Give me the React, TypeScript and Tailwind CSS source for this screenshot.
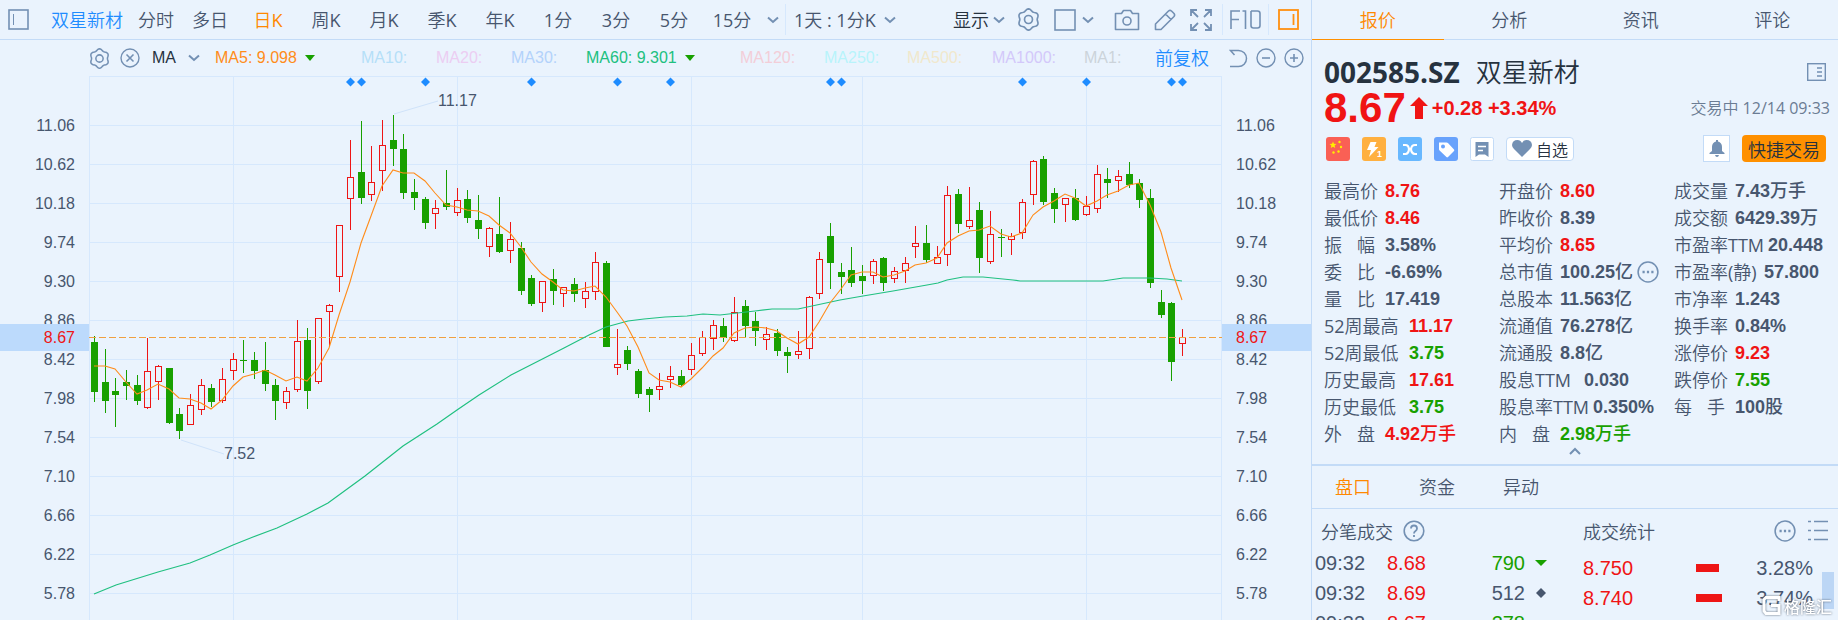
import React from "react";

type Candle = [high: number, bodyTop: number, bodyBottom: number, low: number, rising: 0 | 1];

const CANDLES: Candle[] = [
  [336, 342, 392, 402, 0], [349, 382, 401, 413, 0], [378, 391, 395, 427, 0], [370, 382, 386, 400, 0],
  [375, 385, 401, 405, 0], [338, 371, 408, 409, 1], [365, 366, 382, 400, 1], [368, 368, 423, 424, 0],
  [408, 414, 431, 439, 0], [394, 405, 425, 425, 1], [379, 385, 410, 415, 1], [384, 388, 402, 407, 0],
  [368, 379, 401, 403, 1], [353, 359, 371, 380, 1], [340, 360, 361, 373, 0], [352, 360, 371, 379, 0],
  [342, 370, 384, 391, 0], [379, 385, 401, 420, 0], [387, 391, 403, 409, 1], [320, 341, 390, 392, 1],
  [328, 340, 391, 409, 0], [318, 318, 382, 384, 1], [304, 305, 312, 347, 1], [225, 225, 277, 292, 1],
  [140, 177, 199, 230, 1], [121, 172, 198, 204, 0], [146, 182, 195, 201, 1], [120, 145, 171, 191, 1],
  [115, 140, 149, 166, 0], [134, 149, 193, 199, 0], [179, 192, 198, 210, 0], [197, 199, 223, 229, 0],
  [200, 208, 214, 229, 1], [170, 203, 207, 210, 0], [188, 200, 213, 216, 1], [190, 199, 218, 223, 0],
  [195, 220, 229, 239, 0], [227, 228, 247, 257, 1], [197, 234, 252, 253, 0], [222, 239, 251, 263, 1],
  [242, 248, 291, 295, 0], [275, 278, 304, 306, 0], [281, 281, 303, 312, 1], [269, 279, 291, 305, 0],
  [287, 287, 294, 307, 1], [278, 284, 294, 302, 0], [282, 291, 299, 308, 1], [252, 262, 292, 300, 1],
  [261, 263, 347, 347, 0], [329, 364, 368, 375, 1], [346, 350, 364, 370, 0], [369, 371, 394, 398, 0],
  [387, 389, 395, 412, 0], [373, 386, 390, 400, 1], [366, 376, 380, 388, 1], [370, 376, 385, 387, 0],
  [343, 355, 370, 375, 1], [331, 337, 354, 356, 1], [320, 325, 339, 350, 1], [318, 326, 338, 342, 0],
  [297, 312, 341, 342, 1], [300, 306, 326, 337, 0], [312, 321, 331, 346, 0], [327, 334, 340, 350, 1],
  [329, 333, 351, 356, 0], [347, 352, 356, 373, 0], [331, 351, 355, 359, 1], [296, 297, 349, 359, 1],
  [252, 259, 294, 299, 1], [223, 236, 263, 289, 0], [263, 272, 277, 294, 0], [247, 270, 283, 287, 0],
  [265, 276, 281, 294, 0], [259, 261, 276, 284, 1], [257, 258, 283, 291, 0], [267, 271, 279, 283, 1],
  [257, 263, 271, 283, 1], [226, 243, 247, 258, 1], [225, 243, 260, 263, 0], [246, 257, 264, 264, 1],
  [186, 195, 255, 266, 1], [189, 194, 224, 233, 0], [187, 220, 227, 229, 1], [202, 210, 258, 273, 0],
  [211, 234, 262, 264, 1], [229, 237, 238, 257, 0], [233, 236, 240, 255, 1], [199, 202, 233, 239, 1],
  [160, 161, 195, 205, 1], [156, 159, 202, 205, 0], [188, 193, 209, 223, 0], [198, 198, 205, 222, 1],
  [189, 198, 220, 221, 0], [196, 206, 215, 216, 1], [165, 174, 209, 213, 1], [168, 179, 183, 198, 0],
  [170, 176, 181, 192, 1], [162, 174, 185, 188, 0], [179, 183, 200, 208, 0], [189, 198, 283, 288, 0],
  [290, 302, 315, 318, 0], [302, 303, 362, 381, 0], [329, 337, 344, 356, 1],
];

const MA5 = [
  366, 366, 369, 382, 394, 390, 384, 389, 398, 399, 403, 409, 400, 386, 377, 374, 370, 375, 381, 377, 381,
  368, 348, 315, 282, 243, 216, 186, 170, 173, 173, 181, 193, 205, 207, 210, 211, 216, 225, 233, 247, 262,
  274, 282, 290, 291, 288, 286, 297, 312, 326, 347, 373, 380, 382, 387, 379, 368, 356, 348, 333, 328, 327,
  328, 331, 338, 344, 337, 322, 303, 289, 275, 272, 272, 277, 275, 271, 265, 263, 258, 243, 236, 231, 230,
  226, 234, 237, 233, 215, 207, 201, 194, 198, 206, 201, 195, 191, 185, 183, 205, 232, 268, 300,
];

const MA60 =
  "94,594 116,585 158,572 190,563 210,555 233,545 253,537 277,528 307,514 328,503 365,476 403,446 437,424 457,410 479,395 511,375 564,348 589,335 606,327 628,321 644,319 665,317 687,316 703,314 720,315 755,311 772,309 798,309 840,300 863,296 893,291 927,285 938,283 947,280 963,277 983,277 1013,280 1020,281 1103,281 1123,278 1150,278 1167,279 1182,281";

const AXIS = ["11.06", "10.62", "10.18", "9.74", "9.30", "8.86", "8.42", "7.98", "7.54", "7.10", "6.66", "6.22", "5.78"];
const EVENTS = [350, 361, 425, 531, 617, 670, 830, 841, 1022, 1086, 1171, 1182];

const candleX = (i: number) => 94 + Math.round((i * 32) / 3);

function Chart() {
  return (
    <svg
      className="block h-[544px] w-full"
      viewBox="89 76 1133 544"
      preserveAspectRatio="none"
      role="img"
      aria-label="日K"
    >
      <g shapeRendering="crispEdges">
        <g fill="#d6e8fd">
          <rect x="89" y="76" width="1133" height="1" />
          {AXIS.map((label, i) => (
            <rect key={label} x="89" y={125 + i * 39} width="1133" height="1" />
          ))}
          {[89, 233, 457, 691, 862, 1086, 1221].map((x) => (
            <rect key={x} x={x} y="76" width="1" height="544" />
          ))}
        </g>
        {CANDLES.map(([high, top, bottom, low, rising], i) => {
          const x = candleX(i);
          return rising ? (
            <g key={i} fill="#ee1515">
              {top > high && <rect x={x} y={high} width="1" height={top - high} />}
              {low > bottom && <rect x={x} y={bottom} width="1" height={low - bottom} />}
              <rect x={x - 2.5} y={top + 0.5} width="6" height={bottom - top - 1} fill="none" stroke="#ee1515" />
            </g>
          ) : (
            <g key={i} fill="#18a000">
              <rect x={x} y={high} width="1" height={low - high} />
              <rect x={x - 3} y={top} width="7" height={bottom - top} />
            </g>
          );
        })}
        <path d="M89 337.5H1222" stroke="#f0a040" strokeDasharray="7 3" />
      </g>
      <polyline points={MA60} fill="none" stroke="#20c080" strokeWidth="1.2" />
      <polyline
        points={MA5.map((y, i) => `${candleX(i)},${y}`).join(" ")}
        fill="none"
        stroke="#ff8c1a"
        strokeWidth="1.1"
      />
      <path d="M181 440L224 454M394 114L438 101" stroke="#d0e3fa" />
      {EVENTS.map((x) => (
        <path key={x} d={`M${x + 0.5} 77.5l4.5 4.5l-4.5 4.5l-4.5 -4.5z`} fill="#1e8cff" />
      ))}
      <g fill="#47566e" fontSize="16">
        <text x="438" y="106">11.17</text>
        <text x="224" y="459">7.52</text>
      </g>
    </svg>
  );
}

function Axis({ side }: { side: "left" | "right" }) {
  const align = side === "left" ? "justify-end pr-3.5" : "justify-start pl-3.5";
  return (
    <div className="relative w-[89px] shrink-0 pt-[30px] text-base text-[#47566e]">
      {AXIS.map((label) => (
        <div key={label} className={"flex h-[39px] items-center " + align}>
          {label}
        </div>
      ))}
      <div className={"absolute inset-x-0 top-[248px] flex h-[27px] items-center bg-[#bcdafc] text-[#ee1515] " + align}>
        8.67
      </div>
    </div>
  );
}

function Chevron({ flip = false }: { flip?: boolean }) {
  return (
    <svg width="12" height="8" viewBox="0 0 12 8" fill="none" stroke="#7390b3" strokeWidth="2" className="shrink-0">
      <path d={flip ? "M1 7L6 2L11 7" : "M1 1.5L6 6L11 1.5"} />
    </svg>
  );
}

const GEAR_OUTLINE = Array.from({ length: 72 }, (_, i) => {
  const a = (i / 72) * Math.PI * 2;
  const r = 9.2 - 0.9 * Math.cos(6 * a);
  return `${(11 + r * Math.cos(a)).toFixed(2)},${(11 + r * Math.sin(a)).toFixed(2)}`;
}).join(" ");

function Gear({ size }: { size: number }) {
  return (
    <svg width={size} height={size} viewBox="0 0 22 22" fill="none" stroke="#7390b3" strokeWidth="1.6" strokeLinejoin="round">
      <polygon points={GEAR_OUTLINE} />
      <circle cx="11" cy="11" r="3.8" />
    </svg>
  );
}

function RoundIcon({ children, size = 20 }: { children: React.ReactNode; size?: number }) {
  return (
    <svg width={size} height={size} viewBox="0 0 20 20" fill="none" stroke="#7390b3" strokeWidth="1.4" className="shrink-0">
      <circle cx="10" cy="10" r="9" />
      {children}
    </svg>
  );
}

const MoreDots = () => (
  <RoundIcon size={22}>
    <path d="M5 10h2M9 10h2M13 10h2" strokeWidth="2.2" />
  </RoundIcon>
);

const PERIODS = ["多日", "日K", "周K", "月K", "季K", "年K", "1分", "3分", "5分", "15分"];

function Toolbar() {
  return (
    <div className="flex h-10 items-center border-b border-[#c3dbf7] pl-2 font-['Open_Sans','Noto_Sans_CJK_SC_DemiLight','Noto_Sans_CJK_SC',sans-serif] text-lg text-[#47566e]">
      <button aria-label="侧栏" className="mr-[22px] shrink-0">
        <svg width="21" height="21" fill="none" stroke="#7390b3">
          <rect x="1" y="1" width="19" height="19" strokeWidth="1.6" />
          <path d="M5.500 5v11" />
        </svg>
      </button>
      <button className="mr-2 whitespace-nowrap text-[#1e8cff]">双星新材</button>
      <button className="w-[50px] shrink-0">分时</button>
      {PERIODS.map((p) => (
        <button key={p} className={p === "日K" ? "w-[58px] text-[#ff8800]" : "w-[58px]"}>
          {p}
        </button>
      ))}
      <button aria-label="更多周期" className="flex h-[31px] w-[25px] items-center justify-center border-r border-[#d6e8fd]">
        <Chevron />
      </button>
      <button className="flex items-center gap-2 whitespace-nowrap pl-2">
        1天 : 1分K <Chevron />
      </button>
      <div className="ml-auto flex items-center">
        <button className="mr-3 flex items-center gap-1 whitespace-nowrap text-[#26323f]">
          显示 <Chevron />
        </button>
        <button aria-label="设置" className="mr-3.5">
          <Gear size={23} />
        </button>
        <button aria-label="布局" className="mr-5 flex items-center gap-1.5">
          <svg width="22" height="22" fill="none" stroke="#7390b3" strokeWidth="1.6">
            <rect x="1" y="1" width="20" height="20" />
          </svg>
          <Chevron />
        </button>
        <button aria-label="截图" className="mr-3.5">
          <svg width="26" height="22" viewBox="0 0 26 22" fill="none" stroke="#7390b3" strokeWidth="1.6" strokeLinejoin="round">
            <path d="M1.500 4.500h6l2-3h7l2 3h6v16h-23z" />
            <circle cx="13" cy="12" r="4" />
          </svg>
        </button>
        <button aria-label="画线" className="mr-3.5">
          <svg width="22" height="22" viewBox="0 0 22 22" fill="none" stroke="#7390b3" strokeWidth="1.6" strokeLinejoin="round">
            <path d="M1.500 20.500V15L14.500 2Q16 .8 17.500 2L20 4.500Q21.200 6 20 7.500L7 20.500ZM11.500 5L17 10.500" />
          </svg>
        </button>
        <button aria-label="全屏" className="mr-2.5">
          <svg width="22" height="22" viewBox="0 0 22 22" fill="none" stroke="#7390b3" strokeWidth="1.800">
            <path d="M1 7V1H7M1 1L8 8M15 1H21V7M21 1L14 8M1 15V21H7M1 21L8 14M15 21H21V15M21 21L14 14" />
          </svg>
        </button>
        <button className="flex h-[31px] items-center border-x border-[#d6e8fd] px-[7px]">
          <svg width="31" height="19" viewBox="0 0 31 19" fill="none" stroke="#7390b3" strokeWidth="1.6" role="img" aria-label="F10">
            <path d="M1 19V1H10M1 9.500H9M12.500 1H15.500V19M21 1H27.500Q30 1 30 3.500V15.500Q30 18 27.500 18H23.500Q21 18 21 15.500V1" />
          </svg>
        </button>
        <button aria-label="右栏" className="ml-[9px] mr-3">
          <svg width="21" height="21" fill="none" stroke="#ff9010" strokeWidth="1.800">
            <rect x="1" y="1" width="19" height="19" />
            <path d="M15.500 5v11" />
          </svg>
        </button>
      </div>
    </div>
  );
}

const Down = () => <span className="ml-2 inline-block border-x-[5px] border-t-[6px] border-x-transparent border-t-[#18a000]" />;

function Indicators() {
  return (
    <div className="flex h-9 items-center whitespace-nowrap pl-[89px] text-base">
      <button aria-label="指标设置" className="mr-2.5">
        <Gear size={21} />
      </button>
      <button aria-label="关闭" className="mr-3">
        <RoundIcon>
          <path d="M6.500 6.500l7 7M13.500 6.500l-7 7" strokeWidth="1.600" />
        </RoundIcon>
      </button>
      <button className="flex w-[63px] items-center gap-3 text-[#26323f]">
        MA <Chevron />
      </button>
      <span className="flex w-[146px] items-center text-[#ff8c1a]">MA5: 9.098 <Down /></span>
      <span className="w-[75px] text-[#b5dff8]">MA10:</span>
      <span className="w-[75px] text-[#eccdf2]">MA20:</span>
      <span className="w-[75px] text-[#b3d2fb]">MA30:</span>
      <span className="flex w-[154px] items-center text-[#20c080]">MA60: 9.301 <Down /></span>
      <span className="w-[84px] text-[#f3ced8]">MA120:</span>
      <span className="w-[83px] text-[#b8f3fb]">MA250:</span>
      <span className="w-[85px] text-[#f1e8cc]">MA500:</span>
      <span className="w-[92px] text-[#d3c8fa]">MA1000:</span>
      <span className="text-[#ccd3da]">MA1:</span>
      <div className="ml-auto flex items-center gap-2 pr-[7px]">
        <button className="mr-3 pb-0.5 font-['Noto_Sans_CJK_SC',sans-serif] text-lg font-[350] leading-none text-[#1e8cff]">前复权</button>
        <button aria-label="撤销">
          <svg width="19" height="19" viewBox="0 0 19 19" fill="none" stroke="#7390b3" strokeWidth="1.500">
            <path d="M5.500 6L1.500 1.500H9.500A8 8 0 0 1 9.500 17.500H1" />
          </svg>
        </button>
        <button aria-label="缩小">
          <RoundIcon>
            <path d="M6 10h8" strokeWidth="1.600" />
          </RoundIcon>
        </button>
        <button aria-label="放大">
          <RoundIcon>
            <path d="M6 10h8M10 6v8" strokeWidth="1.600" />
          </RoundIcon>
        </button>
      </div>
    </div>
  );
}

type Tone = "up" | "down" | "flat";
interface Stat {
  label: string;
  value: string;
  unit?: string;
  tone?: Tone;
  width?: string;
  more?: boolean;
}

const TONES: Record<Tone, string> = { up: "text-[#f01414]", down: "text-[#18a000]", flat: "text-[#47566e]" };

const STATS: Stat[][] = [
  [
    { label: "最高价", value: "8.76", tone: "up" },
    { label: "最低价", value: "8.46", tone: "up" },
    { label: "振 幅", value: "3.58%" },
    { label: "委 比", value: "-6.69%" },
    { label: "量 比", value: "17.419" },
    { label: "52周最高", value: "11.17", tone: "up", width: "w-[85px]" },
    { label: "52周最低", value: "3.75", tone: "down", width: "w-[85px]" },
    { label: "历史最高", value: "17.61", tone: "up", width: "w-[85px]" },
    { label: "历史最低", value: "3.75", tone: "down", width: "w-[85px]" },
    { label: "外 盘", value: "4.92", unit: "万手", tone: "up" },
  ],
  [
    { label: "开盘价", value: "8.60", tone: "up" },
    { label: "昨收价", value: "8.39" },
    { label: "平均价", value: "8.65", tone: "up" },
    { label: "总市值", value: "100.25", unit: "亿", more: true },
    { label: "总股本", value: "11.563", unit: "亿" },
    { label: "流通值", value: "76.278", unit: "亿" },
    { label: "流通股", value: "8.8", unit: "亿" },
    { label: "股息TTM", value: "0.030", width: "w-[85px]" },
    { label: "股息率TTM", value: "0.350%", width: "w-[94px]" },
    { label: "内 盘", value: "2.98", unit: "万手", tone: "down" },
  ],
  [
    { label: "成交量", value: "7.43", unit: "万手" },
    { label: "成交额", value: "6429.39", unit: "万" },
    { label: "市盈率TTM", value: "20.448", width: "w-[94px]" },
    { label: "市盈率(静)", value: "57.800", width: "w-[90px]" },
    { label: "市净率", value: "1.243" },
    { label: "换手率", value: "0.84%" },
    { label: "涨停价", value: "9.23", tone: "up" },
    { label: "跌停价", value: "7.55", tone: "down" },
    { label: "每 手", value: "100", unit: "股" },
  ],
];

function StatRow({ label, value, unit, tone = "flat", width = "w-[61px]", more }: Stat) {
  const parts = label.split(" ");
  return (
    <div className="flex h-[27px] items-center whitespace-nowrap text-lg leading-none">
      <dt className={width + " shrink-0 font-['Open_Sans','Noto_Sans_CJK_SC_DemiLight','Noto_Sans_CJK_SC',sans-serif] text-[#47566e]"}>
        {parts.length > 1 ? (
          <span className="flex w-[51px] justify-between">
            <span>{parts[0]}</span>
            <span>{parts[1]}</span>
          </span>
        ) : (
          label
        )}
      </dt>
      <dd className={"flex items-center font-bold " + TONES[tone]}>
        {value}
        {unit && <span className="font-medium">{unit}</span>}
        {more && (
          <button aria-label="市值详情" className="ml-1">
            <MoreDots />
          </button>
        )}
      </dd>
    </div>
  );
}

function Badges() {
  return (
    <div className="flex shrink-0 items-center gap-3 pl-3.5 pr-3 pt-[9px]">
      <svg width="24" height="24" viewBox="0 0 24 24">
        <rect width="24" height="24" rx="3" fill="#fa6055" />
        <path d="M7 4.500l1 2.300 2.500.2-1.900 1.600.6 2.400L7 9.700l-2.200 1.300.6-2.400L3.500 7l2.500-.2z" fill="#ffee00" />
        <g fill="#ffee00">
          <circle cx="13.500" cy="5" r="1.200" />
          <circle cx="15" cy="10" r="1.200" />
          <circle cx="12.500" cy="14.500" r="1.200" />
          <circle cx="7.500" cy="15.500" r="1.200" />
        </g>
      </svg>
      <svg width="24" height="24" viewBox="0 0 24 24">
        <rect width="24" height="24" rx="3" fill="#ffb040" />
        <path d="M8.500 5h6l-2 5h4L7 20l2-7H5z" fill="#fff" />
        <text x="15" y="20" fontSize="9" fontWeight="700" fill="#fff">1</text>
      </svg>
      <svg width="24" height="24" viewBox="0 0 24 24" fill="none" stroke="#fff" strokeWidth="2.200">
        <rect width="24" height="24" rx="3" fill="#68b8ff" stroke="none" />
        <path d="M5 8H7.500Q10.500 8 11 12.200Q10.500 17 7.500 17H5M19 8H17Q13.500 8 13 12.200Q13.500 17 17 17H19M10.500 12.200H13.500" />
      </svg>
      <svg width="24" height="24" viewBox="0 0 24 24">
        <rect width="24" height="24" rx="3" fill="#68a2fc" />
        <path d="M5 5.500h7.500q1 0 1.700.7l5.800 6.300q.7.800 0 1.600l-6 6q-.8.700-1.600 0L5.600 13.500Q5 13 5 12z" fill="#fff" />
        <circle cx="9" cy="9.500" r="2" fill="#68a2fc" />
      </svg>
      <svg width="24" height="24" viewBox="0 0 24 24">
        <rect x=".5" y=".5" width="23" height="23" rx="2" fill="#fff" stroke="#c3dbf7" />
        <path d="M5.500 5h13v15l-3.500-2.500h-6l-3.500 2.500z" fill="#7390b3" />
        <path d="M8 9.500h8M8 13.500h5" stroke="#fff" strokeWidth="1.500" />
      </svg>
      <button className="flex h-6 items-center gap-1 rounded-sm border border-[#c3dbf7] bg-white px-[5px] font-['Noto_Sans_CJK_SC',sans-serif] text-base font-[350] leading-none text-[#26323f]">
        <svg width="20" height="17" viewBox="0 0 20 17" fill="#7390b3">
          <path d="M10 17L2 9Q0 7 0 5Q.5 0 5.500 0Q8.500 0 10 3Q11.500 0 14.500 0Q19.500 0 20 5Q20 7 18 9Z" />
        </svg>
        自选
      </button>
      <button aria-label="提醒" className="ml-auto flex h-[27px] w-[27px] items-center justify-center border border-[#c3dbf7] bg-white">
        <svg width="16" height="17" viewBox="0 0 16 17" fill="#7390b3">
          <path d="M7 0h2v1.500Q13 2.500 13 7V11L15.500 13V14H.5V13L3 11V7Q3 2.500 7 1.500ZM6 15H10Q9.500 17 8 17Q6.500 17 6 15Z" />
        </svg>
      </button>
      <button className="h-[27px] rounded-sm bg-[#ff9000] px-1.5 font-['Noto_Sans_CJK_SC',sans-serif] text-lg font-[350] leading-none text-[#26323f]">
        快捷交易
      </button>
    </div>
  );
}

const TRADES = [
  { time: "09:32", price: "8.68", volume: "790", tone: "down" as Tone },
  { time: "09:32", price: "8.69", volume: "512", tone: "flat" as Tone },
  { time: "09:32", price: "8.67", volume: "278", tone: "down" as Tone },
];
const VOLUME_BY_PRICE = [
  { price: "8.750", share: "3.28%", bar: 23 },
  { price: "8.740", share: "3.74%", bar: 26 },
];

function QuotePanel() {
  return (
    <aside className="relative flex w-[527px] shrink-0 flex-col border-l border-[#c3dbf7]">
      <nav className="grid h-10 shrink-0 grid-cols-4 border-b border-[#c3dbf7] font-['Noto_Sans_CJK_SC',sans-serif] text-lg font-[350] text-[#47566e]">
        <button className="-mb-px border-b border-[#ff9000] pb-0.5 text-[#ff8800]">报价</button>
        <button className="pb-0.5">分析</button>
        <button className="pb-0.5">资讯</button>
        <button className="pb-0.5">评论</button>
      </nav>

      <div className="mt-3.5 flex h-9 shrink-0 items-center pl-3 pr-3 font-['Open_Sans','Noto_Sans_CJK_SC',sans-serif] text-[#26323f]">
        <h1 className="flex items-center gap-4 leading-none">
          <span className="text-[28px] font-bold leading-none">002585.SZ</span>
          <span className="text-[26px] font-[350] leading-none">双星新材</span>
        </h1>
        <button aria-label="公司资料" className="ml-auto">
          <svg width="19" height="18" viewBox="0 0 19 18" fill="none" stroke="#7390b3" strokeWidth="1.400">
            <rect x=".7" y=".7" width="17.600" height="16.600" />
            <path d="M10 5h5M10 9h5M10 13h5" />
          </svg>
        </button>
      </div>

      <div className="flex h-9 shrink-0 items-center pl-3 pr-2 leading-none">
        <span className="mr-1 text-[42px] font-bold text-[#f01414]">8.67</span>
        <svg width="18" height="22" viewBox="0 0 18 22" fill="#f01414" className="mr-1">
          <path d="M9 0L18 9H13V22H5V9H0Z" />
        </svg>
        <span className="whitespace-pre text-xl font-bold leading-none text-[#f01414]">+0.28 +3.34%</span>
        <span className="ml-auto font-['Open_Sans','Noto_Sans_CJK_SC_DemiLight','Noto_Sans_CJK_SC',sans-serif] text-base leading-none text-[#6b7c93]">
          交易中 12/14 09:33
        </span>
      </div>

      <Badges />

      <div className="flex shrink-0 pl-3 pt-[15px]">
        {STATS.map((column, i) => (
          <dl key={i} className={i < 2 ? "w-[175px]" : "min-w-0 flex-1"}>
            {column.map((s) => (
              <StatRow key={s.label} {...s} />
            ))}
          </dl>
        ))}
      </div>
      <button aria-label="收起" className="flex h-[17px] shrink-0 items-start justify-center">
        <Chevron flip />
      </button>

      <nav className="flex h-[45px] shrink-0 items-center gap-12 border-b border-t-2 border-[#c3dbf7] pb-0.5 pl-[23px] font-['Noto_Sans_CJK_SC',sans-serif] text-lg font-[350] text-[#47566e]">
        <button className="text-[#ff8800]">盘口</button>
        <button>资金</button>
        <button>异动</button>
      </nav>

      <div className="flex shrink-0">
        <section className="w-[271px] pl-[3px]">
          <h2 className="flex h-[39px] items-center gap-2.5 pl-1.5 pt-1 font-['Noto_Sans_CJK_SC',sans-serif] text-lg font-[350] text-[#47566e]">
            分笔成交
            <svg width="22" height="22" viewBox="0 0 22 22" fill="none" stroke="#7390b3" strokeWidth="1.600">
              <circle cx="11" cy="11" r="9.800" />
              <path d="M8 8.500Q8 5.500 11 5.500T14 8.500Q14 10 12.500 11T11 13.500M11 15v2" strokeWidth="1.800" />
            </svg>
          </h2>
          <table className="text-xl text-[#47566e]">
            <tbody>
              {TRADES.map((t, i) => (
                <tr key={i} className="h-[30px] leading-none">
                  <td className="w-[72px] p-0">{t.time}</td>
                  <td className="w-[70px] p-0 text-[#f01414]">{t.price}</td>
                  <td className={"w-[68px] p-0 text-right " + TONES[t.tone]}>{t.volume}</td>
                  <td className="w-8 p-0 pl-2.5">
                    <svg width="12" height="12" viewBox="0 0 12 12">
                      {t.tone === "down" ? (
                        <path d="M0 3h12L6 9z" fill="#18a000" />
                      ) : (
                        <path d="M6 1l5 5-5 5-5-5z" fill="#47566e" />
                      )}
                    </svg>
                  </td>
                </tr>
              ))}
            </tbody>
          </table>
        </section>
        <section className="min-w-0 flex-1">
          <h2 className="flex h-[39px] items-center pr-2.5 pt-1 font-['Noto_Sans_CJK_SC',sans-serif] text-lg font-[350] text-[#47566e]">
            成交统计
            <button aria-label="更多" className="ml-auto mr-3">
              <MoreDots />
            </button>
            <button aria-label="列表">
              <svg width="20" height="21" viewBox="0 0 20 21" fill="none" stroke="#7390b3" strokeWidth="1.600">
                <path d="M0 1.500h3M6 1.500h14M0 10.500h3M6 10.500h14M0 19.500h3M6 19.500h14" />
              </svg>
            </button>
          </h2>
          <table className="mt-[5px] w-full text-xl text-[#47566e]">
            <tbody>
              {VOLUME_BY_PRICE.map((v) => (
                <tr key={v.price} className="h-[30px] leading-none">
                  <td className="w-[113px] p-0 text-[#f01414]">{v.price}</td>
                  <td className="p-0">
                    <div className="h-2 bg-[#ee1515]" style={{ width: v.bar }} />
                  </td>
                  <td className="p-0 pr-[25px] text-right">{v.share}</td>
                </tr>
              ))}
            </tbody>
          </table>
        </section>
      </div>

      <div className="absolute right-1 top-[572px] h-[37px] w-3 bg-[#bcd6f5]" />
      <div className="absolute right-1.5 top-[595px] flex items-center gap-0.5 font-['Noto_Sans_CJK_SC',sans-serif] text-base font-medium leading-none text-white drop-shadow-[0_0_1px_#5c6878]">
        <svg width="20" height="21" viewBox="0 0 20 21" fill="none" stroke="#fff" strokeWidth="3">
          <path d="M17 6V2.500H4L2 4.500V16L4 18.500H17V10.500H9" />
        </svg>
        格隆汇
      </div>
    </aside>
  );
}

export default function App() {
  return (
    <div className="flex h-screen overflow-hidden bg-[#eaf3fd] font-['Liberation_Sans','Noto_Sans_CJK_SC',sans-serif]">
      <main className="flex min-w-0 flex-1 flex-col">
        <Toolbar />
        <Indicators />
        <div className="flex">
          <Axis side="left" />
          <div className="min-w-0 flex-1">
            <Chart />
          </div>
          <Axis side="right" />
        </div>
      </main>
      <QuotePanel />
    </div>
  );
}
